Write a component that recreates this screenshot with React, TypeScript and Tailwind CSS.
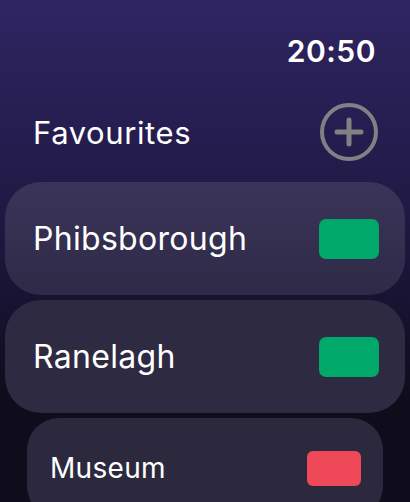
import React from "react";

type Stop = {
  name: string;
  status: "ok" | "bad";
};

const stops: Stop[] = [
  { name: "Phibsborough", status: "ok" },
  { name: "Ranelagh", status: "ok" },
];

const PlusCircle = () => (
  <svg width="58" height="58" viewBox="0 0 58 58" fill="none">
    <circle cx="29" cy="29" r="27" stroke="#818085" strokeWidth="4" />
    <path
      d="M29 17v24M17 29h24"
      stroke="#818085"
      strokeWidth="5"
      strokeLinecap="round"
    />
  </svg>
);

const App = () => {
  return (
    <div
      className="w-[410px] h-[502px] overflow-hidden bg-gradient-to-b from-[#2f2562] via-[#1f1842] via-45% to-[#0f0c1b] to-80% text-white"
      style={{ fontFamily: "Inter, 'Noto Sans', sans-serif" }}
    >
      <div className="flex justify-end pr-[34px] pt-[36px]">
        <span className="text-[30px] leading-none font-semibold tracking-[0.5px]">
          20:50
        </span>
      </div>

      <div className="flex items-center justify-between pl-[33px] pr-[32px] mt-[37px] h-[58px]">
        <h1 className="text-[31px] leading-none tracking-[0.6px]">Favourites</h1>
        <PlusCircle />
      </div>

      <div className="flex flex-col gap-[5px] mt-[21px]">
        {stops.map((stop, index) => (
          <div
            key={index}
            className={`mx-[5px] h-[113px] rounded-[36px] flex items-center justify-between pl-[28px] pr-[26px] ${
              index === 0
                ? "bg-gradient-to-b from-[#3b3459] to-[#2f2a47]"
                : "bg-[#2e2a41]"
            }`}
          >
            <span className="text-[32px] leading-none tracking-[0.3px]">
              {stop.name}
            </span>
            <div className="w-[60px] h-[40px] rounded-[7px] bg-[#00a86a]" />
          </div>
        ))}

        <div className="mx-[27px] h-[100px] rounded-[32px] bg-[#2c293e] flex items-center justify-between pl-[23px] pr-[22px]">
          <span className="text-[28px] leading-none tracking-[0.3px]">Museum</span>
          <div className="w-[54px] h-[35px] rounded-[6px] bg-[#ee4859]" />
        </div>
      </div>
    </div>
  );
};

export default App;
